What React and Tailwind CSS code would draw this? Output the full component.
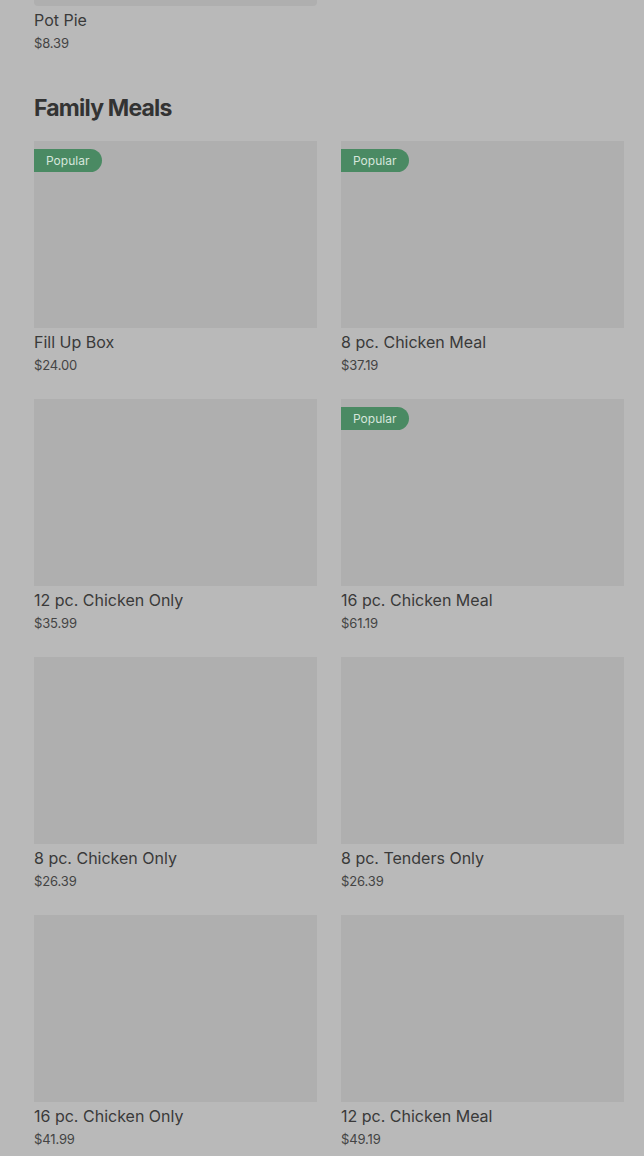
import React from 'react';

const meals = [
  { name: 'Fill Up Box', price: '$24.00', popular: true },
  { name: '8 pc. Chicken Meal', price: '$37.19', popular: true },
  { name: '12 pc. Chicken Only', price: '$35.99' },
  { name: '16 pc. Chicken Meal', price: '$61.19', popular: true },
  { name: '8 pc. Chicken Only', price: '$26.39' },
  { name: '8 pc. Tenders Only', price: '$26.39' },
  { name: '16 pc. Chicken Only', price: '$41.99' },
  { name: '12 pc. Chicken Meal', price: '$49.19' },
];

const ItemText = ({ name, price }) => (
  <div className="pt-1">
    <p className="text-[16px] leading-5 text-[#3a3a3a]">{name}</p>
    <p className="mt-1 text-[13px] leading-[18px] tracking-[-0.01em] text-[#444]">{price}</p>
  </div>
);

const MealCard = ({ meal }) => (
  <div>
    <div className="relative h-[187px] bg-[#afafaf]">
      {meal.popular && (
        <span className="absolute left-0 top-2 flex h-[23px] items-center rounded-r-full bg-[#4a8a63] pl-3 pr-[13px] text-[12px] text-[#d6e6dc]">
          Popular
        </span>
      )}
    </div>
    <ItemText name={meal.name} price={meal.price} />
  </div>
);

export default function App() {
  return (
    <div
      className="min-h-[1156px] bg-[#b9b9b9] pl-[34px] pr-[20px]"
      style={{ fontFamily: 'Inter, "Liberation Sans", sans-serif' }}
    >
      {/* tail of the previous section */}
      <div className="w-[283px]">
        <div className="h-[6px] rounded-b-sm bg-[#afafaf]" />
        <ItemText name="Pot Pie" price="$8.39" />
      </div>

      <h2 className="mt-[42px] text-[23px] font-bold leading-7 tracking-[-0.035em] text-[#333]">
        Family Meals
      </h2>

      <div className="mt-[19px] grid grid-cols-2 gap-x-6 gap-y-[25px]">
        {meals.map((meal) => (
          <MealCard key={meal.name} meal={meal} />
        ))}
      </div>
    </div>
  );
}
